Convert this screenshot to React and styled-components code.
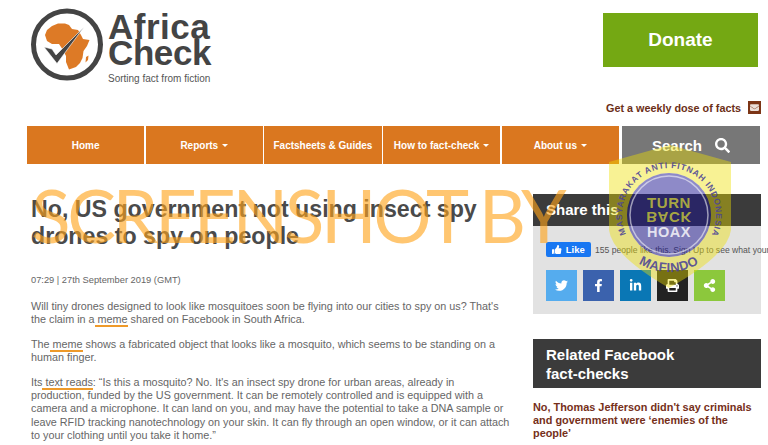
import styled, { createGlobalStyle } from "styled-components"
import { FaSearch, FaTwitter, FaFacebookF, FaLinkedinIn, FaPrint, FaShareAlt, FaThumbsUp, FaEnvelope } from "react-icons/fa"

const GlobalStyle = createGlobalStyle`
  html, body {
    margin: 0;
    background: #fff;
    font-family: "Liberation Sans", Arial, sans-serif;
  }
`

const Page = styled.div`
  position: relative;
  width: 768px;
  height: 445px;
  overflow: hidden;
`

const Header = styled.header`
  display: flex;
  justify-content: space-between;
  height: 126px;
  box-sizing: border-box;
  padding: 8px 7px 0 30px;
`

const Logo = styled.div`
  display: flex;
  gap: 4px;
`

const LogoText = styled.div`
  color: #444;
  padding-top: 6px;
`

const LogoWord = styled.div`
  font-size: 35px;
  font-weight: bold;
  line-height: 26px;
  letter-spacing: ${(p) => p.$spacing};
`

const Tagline = styled.div`
  margin-top: 7px;
  font-size: 10px;
  line-height: 12px;
  color: #555;
`

const HeaderRight = styled.div`
  display: flex;
  flex-direction: column;
  align-items: flex-end;
`

const Donate = styled.a`
  display: flex;
  align-items: center;
  justify-content: center;
  width: 155px;
  height: 54px;
  margin: 5px 3px 0 0;
  background: #74a813;
  color: #fff;
  font-size: 19px;
  font-weight: bold;
`

const Weekly = styled.a`
  display: flex;
  align-items: center;
  gap: 7px;
  margin-top: 34px;
  color: #6b2f17;
  font-size: 10.8px;
  font-weight: bold;
`

const MailIcon = styled.span`
  display: flex;
  align-items: center;
  justify-content: center;
  width: 13px;
  height: 13px;
  background: #7c3516;
  color: #eadfd8;
  font-size: 9px;
`

const Nav = styled.nav`
  display: flex;
  gap: 1.5px;
  height: 38px;
  margin: 0 8px 0 27px;
`

const NavItem = styled.a`
  display: flex;
  align-items: center;
  justify-content: center;
  gap: 4px;
  width: 117.2px;
  background: #da771f;
  color: #fff;
  font-size: 10px;
  font-weight: bold;
`

const Caret = styled.i`
  width: 0;
  height: 0;
  border-left: 3.5px solid transparent;
  border-right: 3.5px solid transparent;
  border-top: 3.5px solid #fff;
`

const SearchItem = styled.a`
  display: flex;
  align-items: center;
  justify-content: center;
  gap: 13px;
  flex: 1;
  margin-left: 1.5px;
  background: #777;
  color: #fff;
  font-size: 15px;
  font-weight: bold;
`

const Main = styled.main`
  display: flex;
  gap: 18px;
  padding: 30px 0 0 31px;
`

const Article = styled.article`
  width: 484px;
  flex: none;
`

const Title = styled.h1`
  margin: 2px 30px 0 0;
  color: #4a4a4a;
  font-size: 23.2px;
  line-height: 27px;
  font-weight: bold;
`

const DateLine = styled.div`
  margin: 23px 0 13px;
  color: #666;
  font-size: 9.3px;
  line-height: 14px;
`

const Para = styled.p`
  margin: 11px 0 0;
  color: #666;
  font-size: 10.8px;
  line-height: 13.4px;
`

const Underlined = styled.a`
  border-bottom: 2px solid #ee9a2a;
  white-space: pre;
`

const Sidebar = styled.aside`
  width: 228px;
  flex: none;
`

const BoxHeading = styled.h2`
  margin: 0;
  padding: 5px 13px;
  background: #3b3b3b;
  color: #fff;
  font-size: 15px;
  line-height: 22px;
  font-weight: bold;
`

const ShareBody = styled.div`
  height: 88px;
  box-sizing: border-box;
  padding: 16px 0 0 13px;
  background: #e2e2e2;
`

const LikeRow = styled.div`
  display: flex;
  align-items: center;
  gap: 4px;
  height: 15px;
  white-space: nowrap;
  color: #555;
  font-size: 8.6px;
`

const LikeButton = styled.span`
  display: flex;
  align-items: center;
  justify-content: center;
  gap: 4px;
  width: 45px;
  height: 15px;
  flex: none;
  border-radius: 2px;
  background: #1877f2;
  color: #fff;
  font-size: 9.5px;
  font-weight: bold;
`

const ShareButtons = styled.div`
  display: flex;
  gap: 6px;
  margin-top: 13px;
`

const ShareButton = styled.a`
  display: flex;
  align-items: center;
  justify-content: center;
  width: 31px;
  height: 31px;
  background: ${(p) => p.$bg};
  color: #fff;
  font-size: 13px;
`

const RelatedBox = styled.section`
  margin-top: 25px;
`

const RelatedHeading = styled(BoxHeading)`
  padding: 6px 60px 5px 13px;
  line-height: 19px;
`

const RelatedLink = styled.a`
  display: block;
  margin-top: 13px;
  color: #76301a;
  font-size: 10.9px;
  font-weight: bold;
  line-height: 13px;
`

const Watermark = styled.div`
  position: absolute;
  left: 31px;
  top: 171px;
  color: rgba(255, 163, 26, 0.62);
  font-family: Lato, "Liberation Sans", sans-serif;
  font-size: 73px;
  line-height: 88px;
  letter-spacing: -3.4px;
  white-space: nowrap;
  pointer-events: none;
`

const BadgeSvg = styled.svg`
  position: absolute;
  left: 604px;
  top: 140px;
  pointer-events: none;
`

function AfricaLogo() {
  return (
    <svg width="74" height="74" viewBox="30 8 74 74">
      <circle cx="67" cy="44.5" r="33.5" fill="none" stroke="#444" strokeWidth="5" />
      <path
        fill="#dd7a26"
        d="M45 35 L47 30 L52 26 L58 23.5 L65 23.5 L69 25 L72 29 L78 30 L81 35 L83 39 L89.5 40 L87 46 L83.5 51 L82.5 58 L80 63 L76 67 L69 69.5 L66 62 L66 56 L63 50 L59 44 L52 44 L47 41 Z"
      />
      <path fill="#dd7a26" d="M86 57 L88.5 55.5 L88 60 L85.5 62.5 Z" />
      <path fill="#444" d="M44 47 L52 49 L56 55 L84 27 L57 63.5 Z" stroke="#fff" strokeWidth="0.6" />
    </svg>
  )
}

function Badge() {
  const font = "Liberation Sans, sans-serif"
  return (
    <BadgeSvg width="132" height="155" viewBox="604 140 132 155">
      <defs>
        <path id="ringTop" d="M626 234 A47 47 0 1 1 712 234" />
        <path id="ringBottom" d="M612 215 A57 57 0 0 0 726 215" />
      </defs>
      <path
        fillRule="evenodd"
        d="M609 162 L670 145 L731 162 L731 230 Q728 255 669 288 Q612 255 609 230 Z M627 215 A42 42 0 1 0 711 215 A42 42 0 1 0 627 215 Z"
        fill="#efe000"
        fillOpacity="0.42"
      />
      <circle cx="669" cy="215" r="42" fill="#18108f" fillOpacity="0.49" />
      <circle cx="669" cy="215" r="39" fill="none" stroke="#fff" strokeOpacity="0.55" strokeWidth="1.5" />
      <text fontFamily={font} fontSize="8.5" fontWeight="bold" fill="#4d4596" fillOpacity="0.9" textLength="187">
        <textPath href="#ringTop">MASYARAKAT ANTI FITNAH INDONESIA</textPath>
      </text>
      <text fontFamily={font} fontSize="13" fontWeight="bold" fill="#4d4596" fillOpacity="0.9" letterSpacing="0.5" textAnchor="middle">
        <textPath href="#ringBottom" startOffset="50%">MAFINDO</textPath>
      </text>
      <text x="669" y="208" textAnchor="middle" fontFamily={font} fontSize="15" fontWeight="bold" fill="#c9c93a" fillOpacity="0.8" letterSpacing="0.6">TURN</text>
      <text transform="translate(0 436) scale(1 -1)" x="669" y="224" textAnchor="middle" fontFamily={font} fontSize="15" fontWeight="bold" fill="#c9c93a" fillOpacity="0.8" letterSpacing="0.6">BACK</text>
      <text x="669" y="237" textAnchor="middle" fontFamily={font} fontSize="14.5" fontWeight="bold" fill="#fff" fillOpacity="0.8" letterSpacing="0.5">HOAX</text>
    </BadgeSvg>
  )
}

export default function App() {
  return (
    <Page>
      <GlobalStyle />
      <Header>
        <Logo>
          <AfricaLogo />
          <LogoText>
            <LogoWord $spacing="0.5px">Africa</LogoWord>
            <LogoWord $spacing="-0.4px">Check</LogoWord>
            <Tagline>Sorting fact from fiction</Tagline>
          </LogoText>
        </Logo>
        <HeaderRight>
          <Donate>Donate</Donate>
          <Weekly>
            Get a weekly dose of facts
            <MailIcon><FaEnvelope /></MailIcon>
          </Weekly>
        </HeaderRight>
      </Header>

      <Nav>
        <NavItem>Home</NavItem>
        <NavItem>Reports <Caret /></NavItem>
        <NavItem>Factsheets &amp; Guides</NavItem>
        <NavItem>How to fact-check <Caret /></NavItem>
        <NavItem>About us <Caret /></NavItem>
        <SearchItem>Search <FaSearch /></SearchItem>
      </Nav>

      <Main>
        <Article>
          <Title>No, US government not using insect spy drones to spy on people</Title>
          <DateLine>07:29 | 27th September 2019 (GMT)</DateLine>
          <Para>
            Will tiny drones designed to look like mosquitoes soon be flying into our cities to spy on us? That's the claim in a<Underlined> meme</Underlined> shared on Facebook in South Africa.
          </Para>
          <Para>
            The<Underlined> meme</Underlined> shows a fabricated object that looks like a mosquito, which seems to be standing on a human finger.
          </Para>
          <Para>
            Its<Underlined> text reads</Underlined>: “Is this a mosquito? No. It's an insect spy drone for urban areas, already in<br />
            production, funded by the US government. It can be remotely controlled and is equipped with a camera and a microphone. It can land on you, and may have the potential to take a DNA sample or leave RFID tracking nanotechnology on your skin. It can fly through an open window, or it can attach to your clothing until you take it home.”
          </Para>
        </Article>

        <Sidebar>
          <BoxHeading>Share this</BoxHeading>
          <ShareBody>
            <LikeRow>
              <LikeButton><FaThumbsUp /> Like</LikeButton>
              155 people like this. Sign Up to see what your
            </LikeRow>
            <ShareButtons>
              <ShareButton $bg="#55acee"><FaTwitter /></ShareButton>
              <ShareButton $bg="#3b62ad"><FaFacebookF /></ShareButton>
              <ShareButton $bg="#0a77b5"><FaLinkedinIn /></ShareButton>
              <ShareButton $bg="#222"><FaPrint /></ShareButton>
              <ShareButton $bg="#8cc83c"><FaShareAlt /></ShareButton>
            </ShareButtons>
          </ShareBody>
          <RelatedBox>
            <RelatedHeading>Related Facebook fact-checks</RelatedHeading>
            <RelatedLink>No, Thomas Jefferson didn't say criminals and government were ‘enemies of the people’</RelatedLink>
          </RelatedBox>
        </Sidebar>
      </Main>

      <Watermark>SCREENSHOT BY</Watermark>
      <Badge />
    </Page>
  )
}
